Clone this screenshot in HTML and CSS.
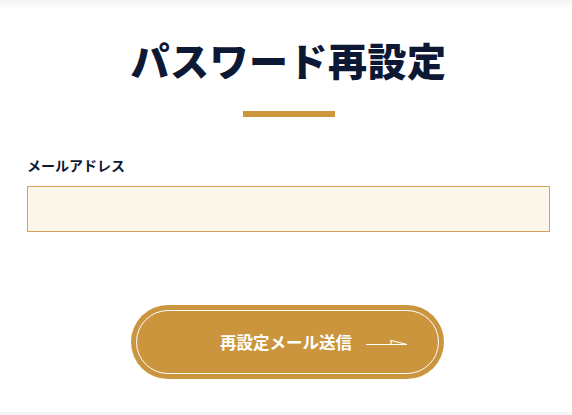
FILE: index.html
```html
<!DOCTYPE html>
<html lang="ja">
<head>
  <meta charset="UTF-8" />
  <meta name="viewport" content="width=device-width, initial-scale=1" />
  <title>パスワード再設定</title>
  <link rel="stylesheet" href="styles.css">
</head>
<body>
  <div class="top-shade"></div>
  <main class="reset">
    <h1 class="reset-title">パスワード再設定</h1>
    <div class="reset-bar"></div>

    <form class="reset-form" onsubmit="return false">
      <label class="field-label" for="email">メールアドレス</label>
      <input class="field-input" id="email" type="email" />

      <div class="submit-row">
        <button class="submit-btn" type="submit">
          <span class="submit-inner">
            <span class="submit-text">再設定メール送信</span>
            <svg class="submit-arrow" width="42" height="8" viewBox="0 0 42 8">
              <path d="M0 6.5 H41 L25 2.5 V6.5" fill="none" stroke="#fff" stroke-width="1.2" />
            </svg>
          </span>
        </button>
      </div>
    </form>
  </main>
  <div class="bottom-line"></div>
</body>
</html>
```

FILE: styles.css
```css
body {
  margin: 0;
  background: #fff;
  color: #0c1834;
  font-family: "Noto Sans CJK JP", "Noto Sans", sans-serif;
}

.top-shade {
  height: 8px;
  background: linear-gradient(#f3f3f3, #fff);
}

.reset {
  box-sizing: border-box;
  height: 404px;
  padding: 23px 22px 0 27px;
}

.reset-title {
  margin: 0;
  text-align: center;
  font-size: 39px;
  font-weight: 900;
  line-height: 56px;
  letter-spacing: 0.5px;
  color: #0c1834;
}

.reset-bar {
  width: 92px;
  height: 6px;
  margin: 24px auto 0;
  background: #cc963c;
}

.reset-form {
  margin-top: 37px;
}

.field-label {
  display: block;
  font-size: 14px;
  font-weight: 700;
  line-height: 22px;
  color: #0c1834;
}

.field-input {
  display: block;
  box-sizing: border-box;
  width: 100%;
  height: 46px;
  margin-top: 10px;
  border: 1.5px solid #d9a355;
  background: #fdf6ea;
  outline: none;
}

.submit-row {
  display: flex;
  justify-content: center;
  margin-top: 73px;
}

.submit-btn {
  width: 313px;
  height: 74px;
  padding: 5px;
  margin-left: -2px;
  border: none;
  border-radius: 37px;
  background: #cb953d;
  cursor: pointer;
}

.submit-inner {
  display: flex;
  align-items: center;
  justify-content: flex-end;
  box-sizing: border-box;
  height: 100%;
  padding-right: 30px;
  border: 1.5px solid #fff;
  border-radius: 32px;
}

.submit-text {
  font-family: "Noto Sans CJK JP", sans-serif;
  font-size: 16.5px;
  font-weight: 700;
  color: #fff;
  margin-right: 14px;
}

.submit-arrow {
  display: block;
  margin-top: -1px;
}

.bottom-line {
  height: 3px;
  background: #f4f4f4;
}
```
